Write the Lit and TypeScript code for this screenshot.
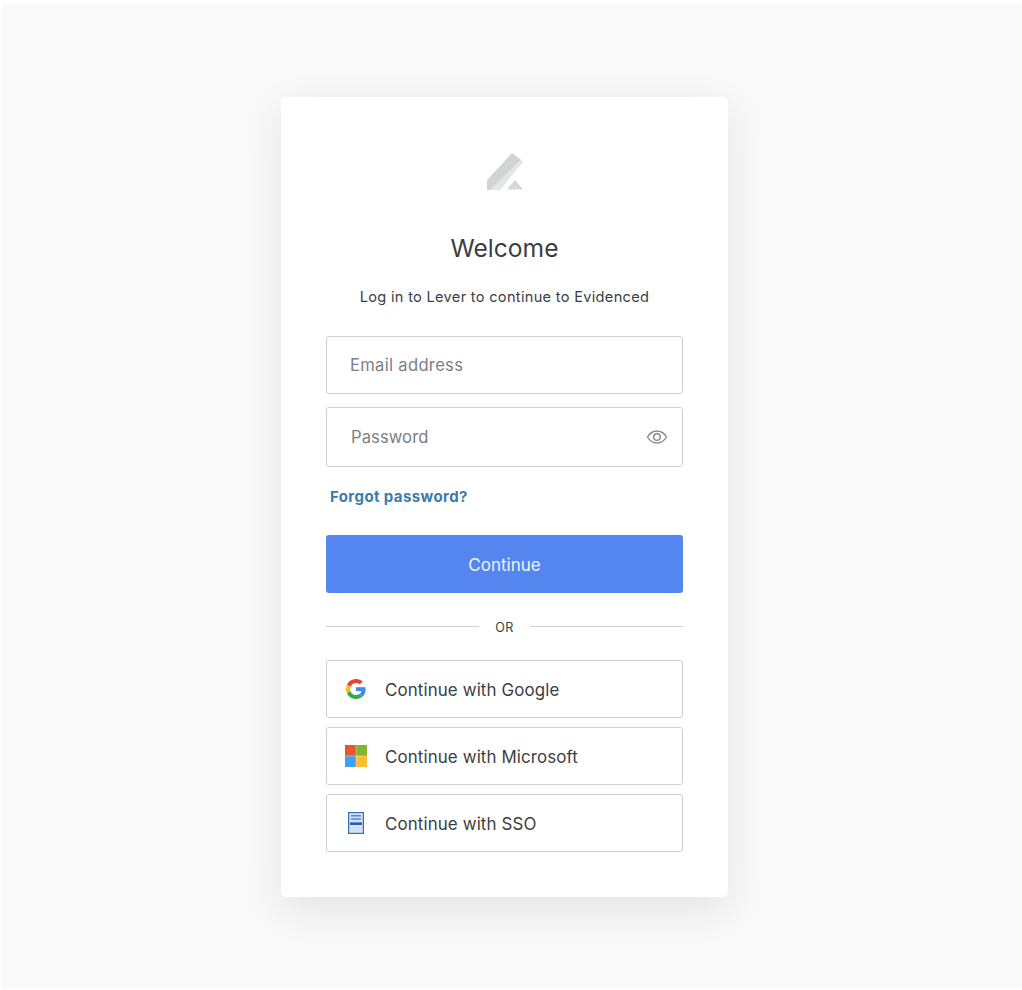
import { LitElement, html, css } from "lit";
import { customElement } from "lit/decorators.js";

@customElement("app-root")
export class AppRoot extends LitElement {
  static styles = css`
    :host { display: block; background: #fff; font-family: Inter, "Liberation Sans", sans-serif; color: #3a3e44; }
    .page { box-sizing: border-box; height: 985px; margin: 4px 0 1px 2px; background: #f9f9f9; padding: 93px 15px 0 0; display: flex; justify-content: center; align-items: flex-start; }
    .card { box-sizing: border-box; width: 447px; height: 800px; background: #fff; border-radius: 5px; box-shadow: 0 12px 40px rgba(0,0,0,.09); padding: 56px 45px 0; display: flex; flex-direction: column; }
    .logo { display: block; align-self: center; width: 38px; height: 38px; margin-bottom: 41px; }
    h1 { margin: 0; font-size: 24.6px; line-height: 32px; font-weight: 400; text-align: center; color: #3a3e44; }
    .sub { margin: 23px 0 0; font-size: 14.6px; line-height: 20px; text-align: center; color: #3a3e44; letter-spacing: .3px; }
    .field { box-sizing: border-box; width: 100%; background: #fff; border: 1px solid #cdcfd2; border-radius: 3px; display: flex; align-items: center; justify-content: space-between; color: #7a7f85; font-size: 16.6px; padding: 0 14px 0 23px; }
    .email { height: 58px; margin-top: 29px; letter-spacing: .3px; }
    .password { height: 60px; margin-top: 13px; padding-left: 24px; letter-spacing: .08px; }
    .eye { width: 22px; height: 22px; display: block; }
    .forgot { margin: 20px 0 0 4px; font-size: 15px; line-height: 20px; font-weight: 700; color: #3a7cab; letter-spacing: .4px; }
    .primary { box-sizing: border-box; margin-top: 28px; height: 58px; padding-top: 2px; border-radius: 3px; background: #5585ee; color: #eef3fe; font-size: 17px; display: flex; align-items: center; justify-content: center; }
    .or { display: flex; align-items: center; gap: 16px; margin-top: 23px; height: 20px; font-size: 12.6px; color: #3a3e44; letter-spacing: .3px; }
    .or span { padding-top: 2px; }
    .or i { flex: 1; height: 1px; background: #cdcfd2; }
    .providers { display: flex; flex-direction: column; gap: 9px; margin-top: 24px; }
    .provider { box-sizing: border-box; height: 58px; background: #fff; border: 1px solid #cdcfd2; border-radius: 3px; display: flex; align-items: center; font-size: 16.9px; letter-spacing: .12px; color: #3a3e44; }
    .label { padding-top: 2px; }
    .slot { width: 58px; flex: none; display: flex; justify-content: center; box-sizing: border-box; }
    .google { width: 20px; height: 20px; display: block; }
    .ms { width: 22px; height: 22px; display: block; }
    .sso { width: 24px; height: 24px; display: block; }
  `;

  render() {
    return html`<div class="page"><main class="card">
      <svg class="logo" viewBox="0 0 38 38">
        <path d="M1 27 L26 0 L35 7 L4 37 L1 37Z" fill="#d2d3d7"/>
        <path d="M35 7 L37 9 L14 37 L4 37Z" fill="#e4e5e8"/>
        <path d="M29 27 L37 36.5 L21 36.5Z" fill="#d6d7da"/>
      </svg>
      <h1>Welcome</h1>
      <p class="sub">Log in to Lever to continue to Evidenced</p>
      <div class="field email">Email address</div>
      <div class="field password">Password
        <svg class="eye" viewBox="0 0 22 22" fill="none" stroke="#85888d" stroke-width="1.4">
          <path d="M1.5 11 C4 6.8 7.3 5 11 5 C14.7 5 18 6.8 20.5 11 C18 15.2 14.7 17 11 17 C7.3 17 4 15.2 1.5 11Z"/>
          <circle cx="11" cy="11" r="3.3"/>
        </svg>
      </div>
      <div class="forgot">Forgot password?</div>
      <div class="primary">Continue</div>
      <div class="or"><i></i><span>OR</span><i></i></div>
      <div class="providers">
        <div class="provider">
          <span class="slot"><svg class="google" viewBox="0 0 48 48">
            <path fill="#EA4335" d="M24 9.5c3.54 0 6.71 1.22 9.21 3.6l6.85-6.85C35.9 2.38 30.47 0 24 0 14.62 0 6.51 5.38 2.56 13.22l7.98 6.19C12.43 13.72 17.74 9.5 24 9.5z"/>
            <path fill="#4285F4" d="M46.98 24.55c0-1.57-.15-3.09-.38-4.55H24v9.02h12.94c-.58 2.96-2.26 5.48-4.78 7.18l7.73 6c4.51-4.18 7.09-10.36 7.09-17.65z"/>
            <path fill="#FBBC05" d="M10.53 28.59c-.48-1.45-.76-2.99-.76-4.59s.27-3.14.76-4.59l-7.98-6.19C.92 16.46 0 20.12 0 24c0 3.88.92 7.54 2.56 10.78l7.97-6.19z"/>
            <path fill="#34A853" d="M24 48c6.48 0 11.93-2.13 15.89-5.81l-7.73-6c-2.15 1.45-4.92 2.3-8.16 2.3-6.26 0-11.57-4.22-13.47-9.91l-7.98 6.19C6.51 42.62 14.62 48 24 48z"/>
          </svg></span>
          <span class="label">Continue with Google</span>
        </div>
        <div class="provider">
          <span class="slot"><svg class="ms" viewBox="0 0 23 23">
            <rect x="0" y="0" width="11.3" height="11.3" fill="#e8572d"/>
            <rect x="11.7" y="0" width="11.3" height="11.3" fill="#84b42d"/>
            <rect x="0" y="11.7" width="11.3" height="11.3" fill="#3f9ff0"/>
            <rect x="11.7" y="11.7" width="11.3" height="11.3" fill="#fbbb32"/>
          </svg></span>
          <span class="label">Continue with Microsoft</span>
        </div>
        <div class="provider">
          <span class="slot"><svg class="sso" viewBox="0 0 24 24">
            <rect x="4.6" y="1.6" width="14.8" height="20.8" fill="#cfe2f7" stroke="#3f6fb8" stroke-width="1.2"/>
            <rect x="7" y="4.2" width="10" height="1.2" fill="#3f6fb8"/>
            <rect x="7" y="7.4" width="10" height="1.2" fill="#3f6fb8"/>
            <rect x="6" y="11.4" width="12" height="2.6" fill="#2f5ea8"/>
          </svg></span>
          <span class="label">Continue with SSO</span>
        </div>
      </div>
    </main></div>`;
  }
}
